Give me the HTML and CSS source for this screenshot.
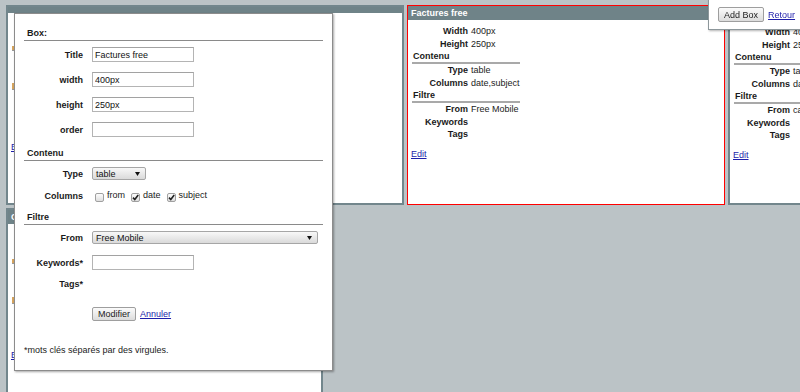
FILE: index.html
```html
<!DOCTYPE html>
<html lang="fr">
<head>
    <meta charset="UTF-8">
    <meta name="viewport" content="width=device-width, initial-scale=1.0">
    <title>Boxes</title>
    <link rel="stylesheet" href="styles.css">
</head>
<body>
<div class="board">
    <div class="box box-large">
        <div class="box-title"></div>
        <div class="box-body">
            <span class="mark mark-a"></span>
            <span class="mark mark-b"></span>
            <p class="edit-row edit-first"><a href="#">Edit</a></p>
        </div>
    </div>
    <div class="box box-selected">
        <div class="box-title">Factures free</div>
        <div class="box-body">
            <div class="props">
                <span class="k">Width</span><span class="v">400px</span>
                <span class="k">Height</span><span class="v">250px</span>
                <span class="sec">Contenu</span>
                <span class="k">Type</span><span class="v">table</span>
                <span class="k">Columns</span><span class="v">date,subject</span>
                <span class="sec">Filtre</span>
                <span class="k">From</span><span class="v">Free Mobile</span>
                <span class="k">Keywords</span><span class="v"></span>
                <span class="k">Tags</span><span class="v"></span>
            </div>
            <p class="edit-row"><a href="#">Edit</a></p>
        </div>
    </div>
    <div class="box">
        <div class="box-title">CAF</div>
        <div class="box-body">
            <div class="props">
                <span class="k">Width</span><span class="v">400px</span>
                <span class="k">Height</span><span class="v">250px</span>
                <span class="sec">Contenu</span>
                <span class="k">Type</span><span class="v">table</span>
                <span class="k">Columns</span><span class="v">date,subject</span>
                <span class="sec">Filtre</span>
                <span class="k">From</span><span class="v">caf.fr</span>
                <span class="k">Keywords</span><span class="v"></span>
                <span class="k">Tags</span><span class="v"></span>
            </div>
            <p class="edit-row"><a href="#">Edit</a></p>
        </div>
    </div>
    <div class="box box-small">
        <div class="box-title">Commandes</div>
        <div class="box-body">
            <span class="mark mark-c"></span>
            <span class="mark mark-d"></span>
            <p class="edit-row edit-second"><a href="#">Edit</a></p>
        </div>
    </div>
</div>

<div class="toolbar">
    <button class="btn">Add Box</button>
    <a href="#">Retour</a>
</div>

<div class="modal">
    <div class="form-sec">Box:</div>
    <div class="row row-first">
        <label for="title">Title</label>
        <input type="text" id="title" value="Factures free">
    </div>
    <div class="row">
        <label for="width">width</label>
        <input type="text" id="width" value="400px">
    </div>
    <div class="row">
        <label for="height">height</label>
        <input type="text" id="height" value="250px">
    </div>
    <div class="row">
        <label for="order">order</label>
        <input type="text" id="order" value="">
    </div>

    <div class="form-sec spaced">Contenu</div>
    <div class="row">
        <label>Type</label>
        <span class="select select-type">table
            <svg width="5" height="4" viewBox="0 0 5 4"><path d="M0 0H5L2.5 4Z" fill="#111"/></svg>
        </span>
    </div>
    <div class="row row-columns">
        <label>Columns</label>
        <span class="check"></span><span class="check-text">from</span>
        <span class="check checked"><svg width="7" height="7" viewBox="0 0 7 7"><path d="M1 3.6L2.8 5.6L6.2 1" fill="none" stroke="#222" stroke-width="1.6"/></svg></span><span class="check-text">date</span>
        <span class="check checked"><svg width="7" height="7" viewBox="0 0 7 7"><path d="M1 3.6L2.8 5.6L6.2 1" fill="none" stroke="#222" stroke-width="1.6"/></svg></span><span class="check-text">subject</span>
    </div>

    <div class="form-sec spaced">Filtre</div>
    <div class="row">
        <label>From</label>
        <span class="select select-from">Free Mobile
            <svg width="5" height="4" viewBox="0 0 5 4"><path d="M0 0H5L2.5 4Z" fill="#111"/></svg>
        </span>
    </div>
    <div class="row">
        <label for="keywords">Keywords*</label>
        <input type="text" id="keywords" value="">
    </div>
    <div class="row row-tags">
        <label>Tags*</label>
    </div>
    <div class="row row-actions">
        <button class="btn btn-submit">Modifier</button>
        <a href="#">Annuler</a>
    </div>
    <p class="note">*mots clés séparés par des virgules.</p>
</div>
</body>
</html>
```

FILE: styles.css
```css
html, body {
    overflow: hidden;
}
body {
    margin: 0;
    background: #bbc3c6;
    font-family: "Liberation Sans", Arial, sans-serif;
    font-size: 9px;
    color: #1a1a1a;
}
a {
    color: #1d1daa;
}
.board {
    width: 1100px;
    padding: 5px 6px;
    display: flex;
    flex-wrap: wrap;
    align-content: flex-start;
    gap: 3px;
}
.box {
    box-sizing: border-box;
    width: 318px;
    height: 200px;
    background: #fff;
    border: 2px solid #72868c;
}
.box-large {
    width: 398px;
}
.box-small {
    width: 317px;
}
.box-selected {
    border: 1px solid #f00;
}
.box-title {
    background: #6f8388;
    color: #fff;
    font-weight: bold;
    padding: 3px;
    line-height: 8px;
}
.box-body {
    padding: 5px 3px;
}
.props {
    display: grid;
    grid-template-columns: 56px max-content;
    width: max-content;
    margin-left: 1px;
    line-height: 12.5px;
}
.props .k {
    text-align: right;
    font-weight: bold;
}
.props .v {
    padding-left: 3px;
    color: #222;
}
.props .sec {
    grid-column: 1 / -1;
    font-weight: bold;
    line-height: 12px;
    padding-left: 1px;
    border-bottom: 2px solid #a9a9a9;
}
.edit-row {
    margin: 7px 0 0;
    line-height: 12px;
}
.mark {
    display: block;
    width: 2px;
    margin-left: 1px;
    background: #d6a45e;
    border-bottom: 1px solid #999;
}
.mark-a {
    height: 4px;
    margin-top: 28px;
}
.mark-b {
    height: 6px;
    margin-top: 32px;
}
.edit-first {
    margin-top: 51px;
}
.mark-c {
    height: 4px;
    margin-top: 30px;
}
.mark-d {
    height: 6px;
    margin-top: 33px;
}
.edit-second {
    margin-top: 45px;
}

.toolbar {
    position: fixed;
    top: -1px;
    left: 708px;
    width: 110px;
    display: flex;
    align-items: center;
    gap: 4px;
    padding: 7px 9px;
    background: #fff;
    border: 1px solid #8d979b;
    box-shadow: 1px 1px 2px rgba(0, 0, 0, 0.3);
}
.btn {
    box-sizing: border-box;
    height: 15px;
    padding: 0 5px;
    font-family: "Liberation Sans", Arial, sans-serif;
    font-size: 9px;
    color: #222;
    border: 1px solid #9e9e9e;
    border-radius: 2px;
    background: linear-gradient(#fbfbfb, #dcdcdc);
}
.btn-submit {
    height: 14px;
    padding: 0 5px;
    margin-right: 4px;
}

.modal {
    position: absolute;
    left: 14px;
    top: 13px;
    width: 319px;
    box-sizing: border-box;
    padding: 13px 9px 14px;
    background: #fff;
    border: 1px solid #8c8c8c;
    box-shadow: 1px 1px 2px rgba(0, 0, 0, 0.35);
}
.form-sec {
    font-weight: bold;
    line-height: 12px;
    padding: 0 3px 1px;
    border-bottom: 1px solid #8a8a8a;
}
.form-sec.spaced {
    margin-top: 5px;
}
.row {
    display: flex;
    align-items: center;
    height: 25px;
}
.row-first {
    margin-top: 1px;
}
.row label {
    width: 59px;
    flex-shrink: 0;
    margin-right: 9px;
    text-align: right;
    font-weight: bold;
}
.row input {
    box-sizing: border-box;
    width: 102px;
    height: 15px;
    margin: 0;
    padding: 0 2px;
    font-family: "Liberation Sans", Arial, sans-serif;
    font-size: 9px;
    color: #111;
    border: 1px solid #b4b4b4;
    border-top-color: #a2a2a2;
    background: #fff;
}
.select {
    box-sizing: border-box;
    display: inline-flex;
    align-items: center;
    justify-content: space-between;
    height: 13px;
    padding: 0 5px 0 3px;
    border: 1px solid #a6a6a6;
    border-radius: 2px;
    background: linear-gradient(#f8f8f8, #dadada);
    color: #111;
}
.select-type {
    width: 54px;
}
.select-from {
    width: 226px;
}
.row-columns {
    height: 20px;
}
.check {
    box-sizing: border-box;
    display: inline-flex;
    align-items: center;
    justify-content: center;
    width: 9px;
    height: 9px;
    margin: 3px 3px 0;
    border: 1px solid #a0a0a0;
    border-radius: 2px;
    background: linear-gradient(#fdfdfd, #dedede);
}
.check-text {
    margin: 0 3px 3px 0;
}
.row-tags {
    height: 18px;
}
.row-actions {
    margin-top: 8px;
    padding-left: 68px;
}
.note {
    margin: 18px 0 0;
    line-height: 12px;
}
```
